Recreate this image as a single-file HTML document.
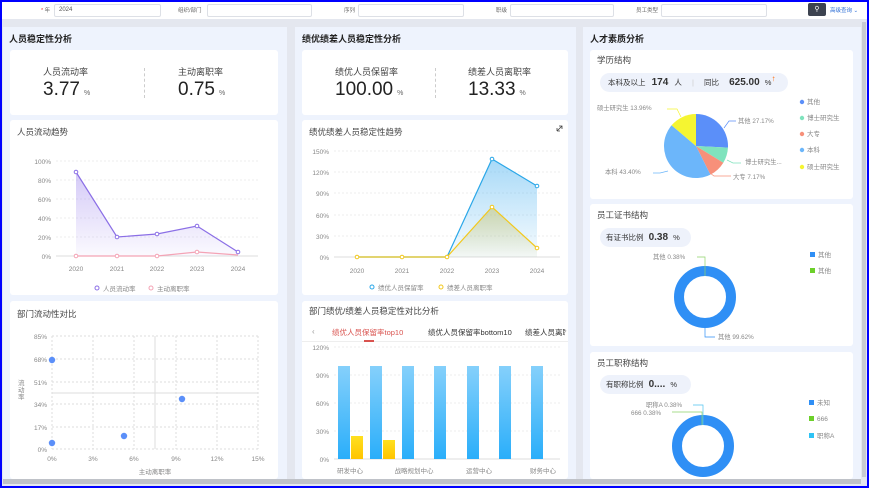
<!DOCTYPE html>
<html><head><meta charset="utf-8"><style>
*{margin:0;padding:0;box-sizing:border-box}
body{width:869px;height:488px;overflow:hidden;background:#0000ff;font-family:"Liberation Sans","Noto Sans CJK SC",sans-serif;color:#333;position:relative}
.a{position:absolute}
.card{position:absolute;background:#fff;border-radius:3px}
.panel{position:absolute;background:#eef3fd;top:27px;height:452px}
.h{position:absolute;font-size:9px;font-weight:bold;color:#222}
.t{position:absolute;font-size:8.5px;color:#444}
.inp{position:absolute;top:4px;height:13px;border:1px solid #dde0e6;border-radius:2px;background:#fff;font-size:6px;color:#555;padding:2px 4px}
.lab{position:absolute;top:6px;font-size:5.5px;color:#666}
.kl{position:absolute;font-size:9px;color:#444}
.kv{position:absolute;font-size:19px;color:#222}
.kv small{font-size:7px;color:#666;margin-left:4px}
.pill{position:absolute;background:#eef2fb;border-radius:10px;height:19px;font-size:7.5px;color:#333;padding:0 8px;line-height:19px;white-space:nowrap}
svg{position:absolute;left:0;top:0}
svg text{font-family:"Liberation Sans","Noto Sans CJK SC",sans-serif}
</style></head><body>
<div class="a" style="left:2px;top:2px;width:865px;height:484px;background:#e4e7ef"></div>
<div class="a" style="left:2px;top:2px;width:865px;height:17px;background:#fff"></div>
<div class="lab" style="left:41px"><span style="color:#e33">*</span> 年</div>
<div class="inp" style="left:54px;width:107px">2024</div>
<div class="lab" style="left:178px">组织/部门</div>
<div class="inp" style="left:207px;width:105px"></div>
<div class="lab" style="left:344px">序列</div>
<div class="inp" style="left:358px;width:106px"></div>
<div class="lab" style="left:496px">职级</div>
<div class="inp" style="left:510px;width:104px"></div>
<div class="lab" style="left:636px">员工类型</div>
<div class="inp" style="left:661px;width:106px"></div>
<div class="a" style="left:808px;top:3px;width:18px;height:13px;background:#3d4350;border-radius:2px;color:#fff;font-size:7px;text-align:center;line-height:13px">⚲</div>
<div class="lab" style="left:830px;color:#2f6fd6">高级查询 ⌄</div>

<div class="panel" style="left:3px;width:284px"></div>
<div class="panel" style="left:295px;width:281px"></div>
<div class="panel" style="left:583px;width:278px"></div>
<div class="a" style="left:862px;top:22px;width:4px;height:455px;background:#c8cbd2"></div>
<div class="a" style="left:3px;top:479px;width:858px;height:5px;background:#bfc2c8"></div>

<div class="h" style="left:9px;top:32px">人员稳定性分析</div>
<div class="h" style="left:302px;top:32px">绩优绩差人员稳定性分析</div>
<div class="h" style="left:590px;top:32px">人才素质分析</div>

<div class="card" style="left:10px;top:50px;width:268px;height:65px"></div>
<div class="kl" style="left:43px;top:65px">人员流动率</div>
<div class="kv" style="left:43px;top:79px">3.77<small>%</small></div>
<div class="a" style="left:144px;top:68px;height:30px;border-left:1px dashed #ccc"></div>
<div class="kl" style="left:178px;top:65px">主动离职率</div>
<div class="kv" style="left:178px;top:79px">0.75<small>%</small></div>

<div class="card" style="left:10px;top:120px;width:268px;height:175px"></div>
<div class="t" style="left:17px;top:126px">人员流动趋势</div>
<div class="card" style="left:10px;top:301px;width:268px;height:178px"></div>
<div class="t" style="left:17px;top:308px">部门流动性对比</div>

<div class="card" style="left:302px;top:50px;width:266px;height:65px"></div>
<div class="kl" style="left:335px;top:65px">绩优人员保留率</div>
<div class="kv" style="left:335px;top:79px">100.00<small>%</small></div>
<div class="a" style="left:435px;top:68px;height:30px;border-left:1px dashed #ccc"></div>
<div class="kl" style="left:468px;top:65px">绩差人员离职率</div>
<div class="kv" style="left:468px;top:79px">13.33<small>%</small></div>
<div class="card" style="left:302px;top:120px;width:266px;height:175px"></div>
<div class="t" style="left:309px;top:126px">绩优绩差人员稳定性趋势</div>
<div class="card" style="left:302px;top:301px;width:266px;height:178px"></div>
<div class="t" style="left:309px;top:305px">部门绩优/绩差人员稳定性对比分析</div>
<div class="a" style="left:302px;top:341px;width:266px;border-top:1px solid #eee"></div>
<div class="a" style="left:312px;top:327px;font-size:8px;color:#999">‹</div>
<div class="a" style="left:332px;top:327px;font-size:7.5px;color:#d9534f">绩优人员保留率top10</div>
<div class="a" style="left:364px;top:340px;width:10px;height:2px;background:#d9534f"></div>
<div class="a" style="left:428px;top:327px;font-size:7.5px;color:#333">绩优人员保留率bottom10</div>
<div class="a" style="left:525px;top:327px;font-size:7.5px;color:#333;width:40px;overflow:hidden;white-space:nowrap">绩差人员离职</div>
<div class="a" style="left:564px;top:326px;font-size:8px;color:#999">›</div>

<div class="card" style="left:590px;top:50px;width:263px;height:149px"></div>
<div class="t" style="left:597px;top:54px">学历结构</div>
<div class="pill" style="left:600px;top:73px;width:188px">本科及以上 <b style="font-size:10px;margin:0 4px">174</b> 人 <span style="color:#ccc;margin:0 8px">|</span> 同比 <b style="font-size:10px;margin:0 3px 0 8px">625.00</b> %<span style="color:#f60;font-size:8px;position:relative;top:-4px">↑</span></div>
<div class="card" style="left:590px;top:204px;width:263px;height:142px"></div>
<div class="t" style="left:597px;top:209px">员工证书结构</div>
<div class="pill" style="left:600px;top:228px;width:91px;padding:0 6px">有证书比例 <b style="font-size:10px;margin:0 3px">0.38</b> %</div>
<div class="card" style="left:590px;top:352px;width:263px;height:127px"></div>
<div class="t" style="left:597px;top:357px">员工职称结构</div>
<div class="pill" style="left:600px;top:375px;width:91px;padding:0 6px">有职称比例 <b style="font-size:10px;margin:0 3px">0....</b> %</div>

<svg width="869" height="488" font-size="6.5" fill="#888">
<defs>
<linearGradient id="g1" x1="0" y1="0" x2="0" y2="1"><stop offset="0" stop-color="#a994f0" stop-opacity=".5"/><stop offset="1" stop-color="#a994f0" stop-opacity=".05"/></linearGradient>
<linearGradient id="g2" x1="0" y1="0" x2="0" y2="1"><stop offset="0" stop-color="#4fb3f0" stop-opacity=".5"/><stop offset="1" stop-color="#4fb3f0" stop-opacity=".05"/></linearGradient>
<linearGradient id="g3" x1="0" y1="0" x2="0" y2="1"><stop offset="0" stop-color="#c8c060" stop-opacity=".5"/><stop offset="1" stop-color="#c8c060" stop-opacity=".05"/></linearGradient>
<linearGradient id="gb" x1="0" y1="0" x2="0" y2="1"><stop offset="0" stop-color="#85d0fb"/><stop offset="1" stop-color="#2aaefa"/></linearGradient>
<linearGradient id="gy" x1="0" y1="0" x2="0" y2="1"><stop offset="0" stop-color="#ffe020"/><stop offset="1" stop-color="#ffc400"/></linearGradient>
</defs>
<g stroke="#eee" stroke-dasharray="2,2"><line x1="56" x2="258" y1="161" y2="161"/><line x1="56" x2="258" y1="180" y2="180"/><line x1="56" x2="258" y1="199" y2="199"/><line x1="56" x2="258" y1="218" y2="218"/><line x1="56" x2="258" y1="237" y2="237"/></g>
<line x1="56" x2="258" y1="256" y2="256" stroke="#ddd"/>
<g text-anchor="end"><text x="51" y="164">100%</text><text x="51" y="183">80%</text><text x="51" y="202">60%</text><text x="51" y="221">40%</text><text x="51" y="240">20%</text><text x="51" y="259">0%</text></g>
<g text-anchor="middle"><text x="76" y="271">2020</text><text x="117" y="271">2021</text><text x="157" y="271">2022</text><text x="197" y="271">2023</text><text x="238" y="271">2024</text></g>
<path d="M76,172L117,237L157,234L197,226L238,252L238,256L76,256Z" fill="url(#g1)"/>
<path d="M76,172L117,237L157,234L197,226L238,252" fill="none" stroke="#8b6fe6" stroke-width="1.2"/>
<path d="M76,256L117,256L157,256L197,252L238,255" fill="none" stroke="#f4a3b5" stroke-width="1.2"/>
<g fill="#fff" stroke="#8b6fe6"><circle cx="76" cy="172" r="1.8"/><circle cx="117" cy="237" r="1.8"/><circle cx="157" cy="234" r="1.8"/><circle cx="197" cy="226" r="1.8"/><circle cx="238" cy="252" r="1.8"/></g>
<g fill="#fff" stroke="#f4a3b5"><circle cx="76" cy="256" r="1.8"/><circle cx="117" cy="256" r="1.8"/><circle cx="157" cy="256" r="1.8"/><circle cx="197" cy="252" r="1.8"/></g>
<circle cx="97" cy="288" r="2" fill="none" stroke="#8b6fe6"/><text x="103" y="291">人员流动率</text>
<circle cx="151" cy="288" r="2" fill="none" stroke="#f4a3b5"/><text x="157" y="291">主动离职率</text>
<g stroke="#ddd" stroke-dasharray="2,2" fill="none"><path d="M52,336H258M52,359H258M52,382H258M52,404H258M52,427H258M52,449H258"/><path d="M52,336V449M93,336V449M134,336V449M176,336V449M217,336V449M258,336V449"/></g>
<line x1="155" x2="155" y1="336" y2="449" stroke="#ddd"/><line x1="52" x2="258" y1="393" y2="393" stroke="#ddd"/>
<g text-anchor="end"><text x="47" y="339">85%</text><text x="47" y="362">68%</text><text x="47" y="385">51%</text><text x="47" y="407">34%</text><text x="47" y="430">17%</text><text x="47" y="452">0%</text></g>
<g text-anchor="middle"><text x="52" y="461">0%</text><text x="93" y="461">3%</text><text x="134" y="461">6%</text><text x="176" y="461">9%</text><text x="217" y="461">12%</text><text x="258" y="461">15%</text><text x="155" y="474">主动离职率</text></g>
<text x="18" y="385" font-size="6.5">流</text><text x="18" y="392">动</text><text x="18" y="399">率</text>
<g fill="#5b8ff9"><circle cx="52" cy="360" r="3.2"/><circle cx="52" cy="443" r="3.2"/><circle cx="124" cy="436" r="3.2"/><circle cx="182" cy="399" r="3.2"/></g>
<g stroke="#eee" stroke-dasharray="2,2"><path d="M334,151H560M334,172H560M334,193H560M334,215H560M334,236H560"/></g>
<line x1="334" x2="560" y1="257" y2="257" stroke="#ddd"/>
<g text-anchor="end"><text x="329" y="154">150%</text><text x="329" y="175">120%</text><text x="329" y="196">90%</text><text x="329" y="218">60%</text><text x="329" y="239">30%</text><text x="329" y="260">0%</text></g>
<g text-anchor="middle"><text x="357" y="273">2020</text><text x="402" y="273">2021</text><text x="447" y="273">2022</text><text x="492" y="273">2023</text><text x="537" y="273">2024</text></g>
<path d="M447,257L492,159L537,186L537,257Z" fill="url(#g2)"/>
<path d="M447,257L492,207L537,248L537,257Z" fill="url(#g3)"/>
<path d="M357,257L447,257L492,159L537,186" fill="none" stroke="#2aa7e8" stroke-width="1.2"/>
<path d="M357,257L447,257L492,207L537,248" fill="none" stroke="#f2c81e" stroke-width="1.2"/>
<g fill="#fff" stroke="#2aa7e8"><circle cx="492" cy="159" r="1.8"/><circle cx="537" cy="186" r="1.8"/></g>
<g fill="#fff" stroke="#f2c81e"><circle cx="357" cy="257" r="1.8"/><circle cx="402" cy="257" r="1.8"/><circle cx="447" cy="257" r="1.8"/><circle cx="492" cy="207" r="1.8"/><circle cx="537" cy="248" r="1.8"/></g>
<circle cx="372" cy="287" r="2" fill="none" stroke="#2aa7e8"/><text x="378" y="290">绩优人员保留率</text>
<circle cx="441" cy="287" r="2" fill="none" stroke="#f2c81e"/><text x="447" y="290">绩差人员离职率</text>
<path d="M557,131L562,126M559,126H562V129M557,131V128M557,131H560" stroke="#444" fill="none" stroke-width=".8"/>
<g stroke="#eee" stroke-dasharray="2,2"><path d="M334,347H560M334,375H560M334,403H560M334,431H560"/></g>
<line x1="334" x2="560" y1="459" y2="459" stroke="#ddd"/>
<g text-anchor="end"><text x="329" y="350">120%</text><text x="329" y="378">90%</text><text x="329" y="406">60%</text><text x="329" y="434">30%</text><text x="329" y="462">0%</text></g>
<g fill="url(#gb)"><rect x="338" y="366" width="12" height="93"/><rect x="370" y="366" width="12" height="93"/><rect x="402" y="366" width="12" height="93"/><rect x="434" y="366" width="12" height="93"/><rect x="467" y="366" width="12" height="93"/><rect x="499" y="366" width="12" height="93"/><rect x="531" y="366" width="12" height="93"/></g>
<rect x="351" y="436" width="12" height="23" fill="url(#gy)"/><rect x="383" y="440" width="12" height="19" fill="url(#gy)"/>
<g text-anchor="middle"><text x="350" y="473">研发中心</text><text x="414" y="473">战略规划中心</text><text x="479" y="473">运营中心</text><text x="543" y="473">财务中心</text></g>
<g transform="translate(696,146)">
<path d="M0,0L0,-32A32,32 0 0 1 31.96,1.6Z" fill="#5b8ff9"/>
<path d="M0,0L31.96,1.6A32,32 0 0 1 27.3,16.7Z" fill="#7fe3bd"/>
<path d="M0,0L27.3,16.7A32,32 0 0 1 14.4,28.6Z" fill="#f7907a"/>
<path d="M0,0L14.4,28.6A32,32 0 0 1 -24.4,-20.7Z" fill="#6cb6fa"/>
<path d="M0,0L-24.4,-20.7A32,32 0 0 1 0,-32Z" fill="#f5f531"/>
</g>
<g fill="none" stroke-width=".7"><path d="M724,128L729,121H736" stroke="#5b8ff9"/><path d="M727,160L733,163H741" stroke="#7fe3bd"/><path d="M710,173L714,176H731" stroke="#f7907a"/><path d="M668,171L660,173H653" stroke="#6cb6fa"/><path d="M681,117L677,109H667" stroke="#f5f531"/></g>
<g font-size="6.3" fill="#888"><text x="738" y="123">其他 27.17%</text><text x="745" y="164">博士研究生...</text><text x="733" y="179">大专 7.17%</text><text x="605" y="174">本科 43.40%</text><text x="597" y="110">硕士研究生 13.96%</text></g>
<g font-size="6.5" fill="#888"><circle cx="802" cy="102" r="2.2" fill="#5b8ff9"/><text x="807" y="104">其他</text><circle cx="802" cy="118" r="2.2" fill="#7fe3bd"/><text x="807" y="120">博士研究生</text><circle cx="802" cy="134" r="2.2" fill="#f7907a"/><text x="807" y="136">大专</text><circle cx="802" cy="150" r="2.2" fill="#6cb6fa"/><text x="807" y="152">本科</text><circle cx="802" cy="167" r="2.2" fill="#f5f531"/><text x="807" y="169">硕士研究生</text></g>
<circle cx="705" cy="297" r="26" fill="none" stroke="#2f8ff5" stroke-width="10"/>
<path d="M705,276V257H697" stroke="#8fd46a" fill="none" stroke-width=".7"/>
<path d="M705,328V337H715" stroke="#2f8ff5" fill="none" stroke-width=".7"/>
<g font-size="6.3" fill="#888"><text x="653" y="259">其他 0.38%</text><text x="718" y="339">其他 99.62%</text></g>
<g font-size="6.5" fill="#888"><rect x="810" y="252" width="5" height="5" fill="#2f8ff5"/><text x="818" y="257">其他</text><rect x="810" y="268" width="5" height="5" fill="#6cd02a"/><text x="818" y="273">其他</text></g>
<circle cx="703" cy="446" r="26" fill="none" stroke="#2f8ff5" stroke-width="10"/>
<path d="M703,425V405H693" stroke="#4fc3ef" fill="none" stroke-width=".7"/>
<path d="M702,425V412H672" stroke="#8fd46a" fill="none" stroke-width=".7"/>
<g font-size="6.3" fill="#888"><text x="646" y="407">职称A 0.38%</text><text x="631" y="415">666 0.38%</text></g>
<g font-size="6.5" fill="#888"><rect x="809" y="400" width="5" height="5" fill="#2f8ff5"/><text x="817" y="405">未知</text><rect x="809" y="416" width="5" height="5" fill="#6cd02a"/><text x="817" y="421">666</text><rect x="809" y="433" width="5" height="5" fill="#2ec3f5"/><text x="817" y="438">职称A</text></g>
</svg>
</body></html>
